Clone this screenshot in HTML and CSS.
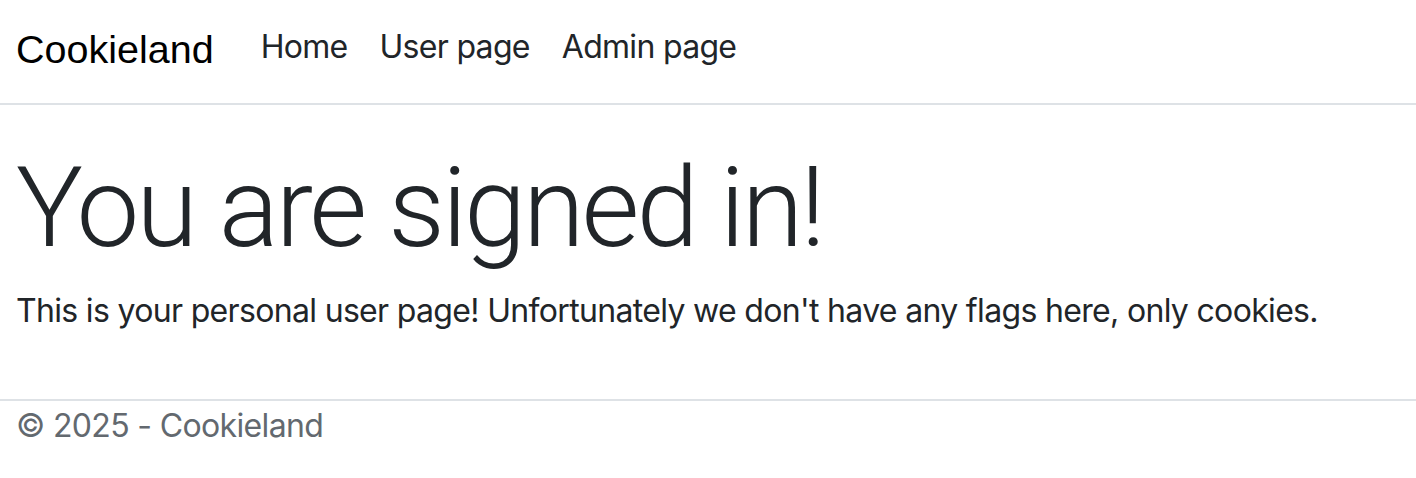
FILE: index.html
```html
<!DOCTYPE html>
<html lang="en">
<head>
<meta charset="utf-8">
<title>Cookieland</title>
<link rel="stylesheet" href="styles.css">
</head>
<body>
<header class="site-header">
  <nav class="navbar">
    <a class="brand" href="#">Cookieland</a>
    <ul class="nav-links">
      <li><a href="#">Home</a></li>
      <li><a href="#">User page</a></li>
      <li><a href="#">Admin page</a></li>
    </ul>
  </nav>
</header>
<main class="content">
  <h1 class="display">You are signed in!</h1>
  <p class="lead-text">This is your personal user page! Unfortunately we don't have any flags here, only cookies.</p>
</main>
<footer class="site-footer">
  <div class="footer-inner">&copy; 2025 - Cookieland</div>
</footer>
</body>
</html>
```

FILE: styles.css
```css
* { box-sizing: border-box; }
html, body { margin: 0; padding: 0; }
body {
  font-family: Inter, "Liberation Sans", Arial, sans-serif;
  color: #212529;
  background: #fff;
  width: 1416px;
  height: 478px;
  overflow: hidden;
}
a { text-decoration: none; }

.site-header {
  border-bottom: 2px solid #dee2e6;
}
.navbar {
  height: 103px;
  display: flex;
  align-items: center;
  padding: 0 16px;
}
.brand {
  font-family: "Liberation Sans", Arial, sans-serif;
  font-size: 39.5px;
  line-height: 48px;
  padding-bottom: 6px;
  color: #000;
  margin-right: 31px;
}
.nav-links {
  list-style: none;
  margin: 0;
  padding: 0;
  display: flex;
}
.nav-links a {
  display: block;
  font-size: 32px;
  line-height: 40px;
  letter-spacing: -0.7px;
  padding: 0 16px 9px;
  color: #212529;
}

.content {
  height: 294px;
  padding: 0 16px;
  overflow: hidden;
}
.display {
  margin: 36px 0 0;
  font-family: Roboto, "Liberation Sans", sans-serif;
  font-size: 112px;
  font-weight: 300;
  line-height: 1.2;
  letter-spacing: -3.1px;
}
.lead-text {
  margin: 12px 0 0;
  font-size: 32px;
  line-height: 48px;
  letter-spacing: -0.67px;
}

.site-footer {
  border-top: 2px solid #dee2e6;
}
.footer-inner {
  padding: 1px 16px 0;
  font-size: 32px;
  line-height: 48px;
  letter-spacing: -0.65px;
  color: #63696f;
}
```
